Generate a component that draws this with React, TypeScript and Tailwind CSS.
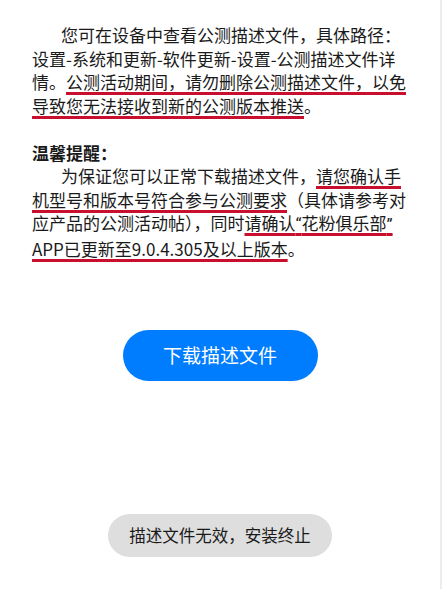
import React from 'react'

const mark =
  'underline decoration-[#c8102e] decoration-[3px] underline-offset-[3px] [text-decoration-skip-ink:none]'

function Line(props: { children: React.ReactNode; indent?: boolean }) {
  return <span className={props.indent ? 'block pl-[29px]' : 'block'}>{props.children}</span>
}

// narrow latin quotes like the reference
function Q(props: { children: React.ReactNode }) {
  return <span style={{ fontFamily: 'Roboto, sans-serif' }}>{props.children}</span>
}

export default function App() {
  return (
    <div
      className="relative h-[589px] w-[442px] overflow-hidden border-r-2 border-[#ececec] bg-white"
      style={{ fontFamily: '"Noto Sans CJK SC", "Noto Sans", sans-serif' }}
    >
      <div className="pl-[32px] pt-[23px] text-[17px] leading-[23.5px] text-[#1a1a1a]">
        <Line indent>您可在设备中查看公测描述文件，具体路径：</Line>
        <Line>设置-系统和更新-软件更新-设置-公测描述文件详</Line>
        <Line>
          情。<span className={mark}>公测活动期间，请勿删除公测描述文件，以免</span>
        </Line>
        <Line>
          <span className={mark}>导致您无法接收到新的公测版本推送</span>。
        </Line>
        <Line>&nbsp;</Line>
        <Line>
          <span className="font-bold">温馨提醒：</span>
        </Line>
        <Line indent>
          为保证您可以正常下载描述文件，<span className={mark}>请您确认手</span>
        </Line>
        <Line>
          <span className={mark}>机型号和版本号符合参与公测要求</span>（具体请参考对
        </Line>
        <Line>
          应产品的公测活动帖），同时
          <span className={mark}>
            请确认<Q>“</Q>花粉俱乐部<Q>”</Q>
          </span>
        </Line>
        <Line>
          <span className={mark}>APP已更新至9.0.4.305及以上版本</span>。
        </Line>
      </div>

      <div className="mt-[70px] flex justify-center">
        <button
          type="button"
          className="h-[51px] w-[195px] rounded-full bg-[#007dff] text-[19px] text-white"
        >
          下载描述文件
        </button>
      </div>

      <div className="mt-[133px] flex justify-center">
        <div className="flex h-[43px] w-[224px] items-center justify-center rounded-full bg-[#dedede] text-[16.5px] text-[#1a1a1a]">
          描述文件无效，安装终止
        </div>
      </div>
    </div>
  )
}
